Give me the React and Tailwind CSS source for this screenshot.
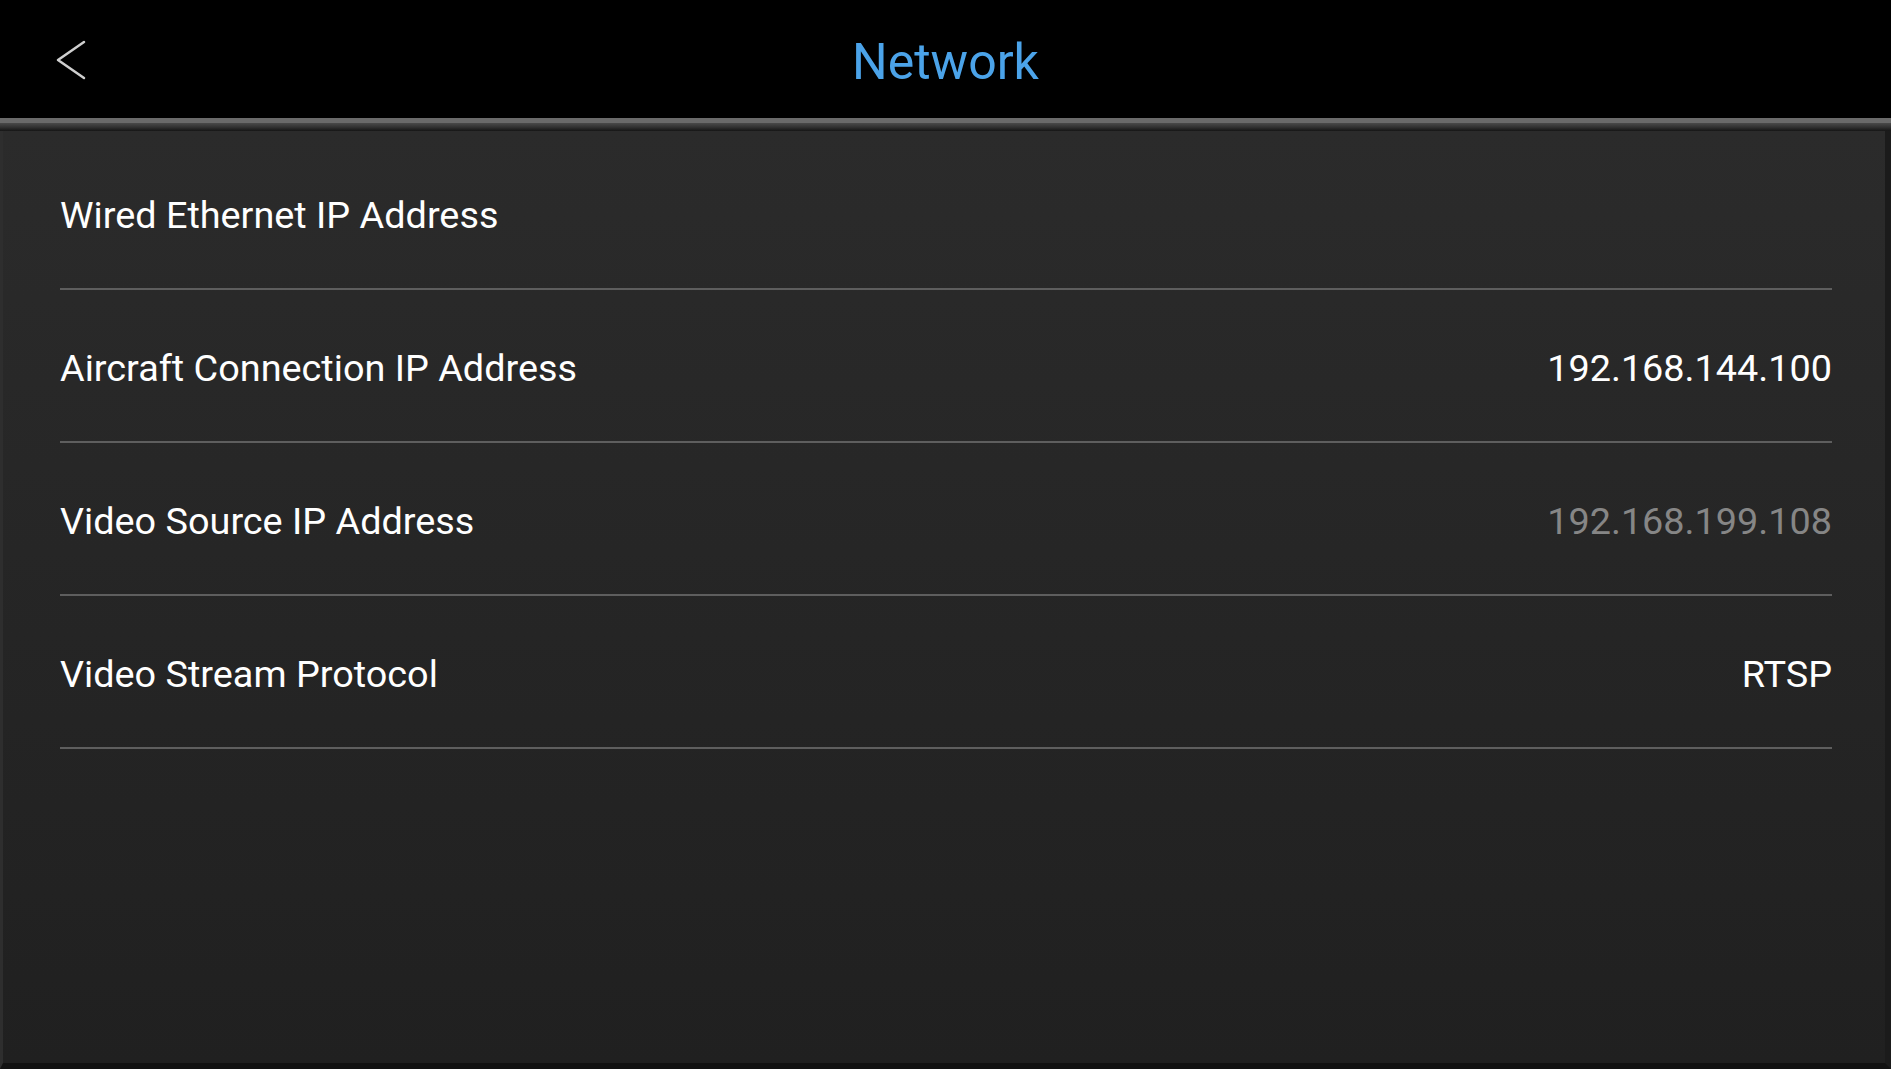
const rows = [
  { label: "Wired Ethernet IP Address", value: "" },
  { label: "Aircraft Connection IP Address", value: "192.168.144.100" },
  { label: "Video Source IP Address", value: "192.168.199.108", muted: true },
  { label: "Video Stream Protocol", value: "RTSP" },
];

function BackArrow() {
  return (
    <svg width="32" height="40" viewBox="0 0 32 40" fill="none">
      <path d="M29 2 L3 20 L29 38" stroke="#cfcfcf" strokeWidth="2.5" strokeLinecap="round" strokeLinejoin="round" />
    </svg>
  );
}

export default function App() {
  return (
    <div className="w-[1891px] h-[1069px] flex flex-col bg-black overflow-hidden font-['Roboto',sans-serif]">
      {/* top bar */}
      <header className="relative h-[118px] shrink-0 flex items-center justify-center bg-black">
        <button className="absolute left-[55px] top-[40px]">
          <BackArrow />
        </button>
        <h1 className="text-[50px] leading-none text-[#4ba3e9] pt-[6px]">Network</h1>
      </header>
      <div className="h-[5px] shrink-0 bg-[#6a6a6a]" />
      <div className="h-[8px] shrink-0 bg-gradient-to-b from-[#4a4a4a] via-[#333] to-[#161616]" />

      {/* list */}
      <main className="flex-1 flex flex-col bg-gradient-to-b from-[#2b2b2b] to-[#202020] border-l-[3px] border-l-[#2e2e2e] border-r-[6px] border-r-[#1b1b1b] border-b-[6px] border-b-[#121212]">
        <div className="pl-[57px] pr-[53px] pt-[6px]">
          {rows.map((row) => (
            <div
              key={row.label}
              className="h-[153px] pt-[6px] flex items-center justify-between border-b-2 border-[#5e5e5e]"
            >
              <span className="text-[37.8px] text-white">{row.label}</span>
              <span className={`text-[37.8px] ${row.muted ? "text-[#868686]" : "text-white"}`}>
                {row.value}
              </span>
            </div>
          ))}
        </div>
      </main>
    </div>
  );
}
